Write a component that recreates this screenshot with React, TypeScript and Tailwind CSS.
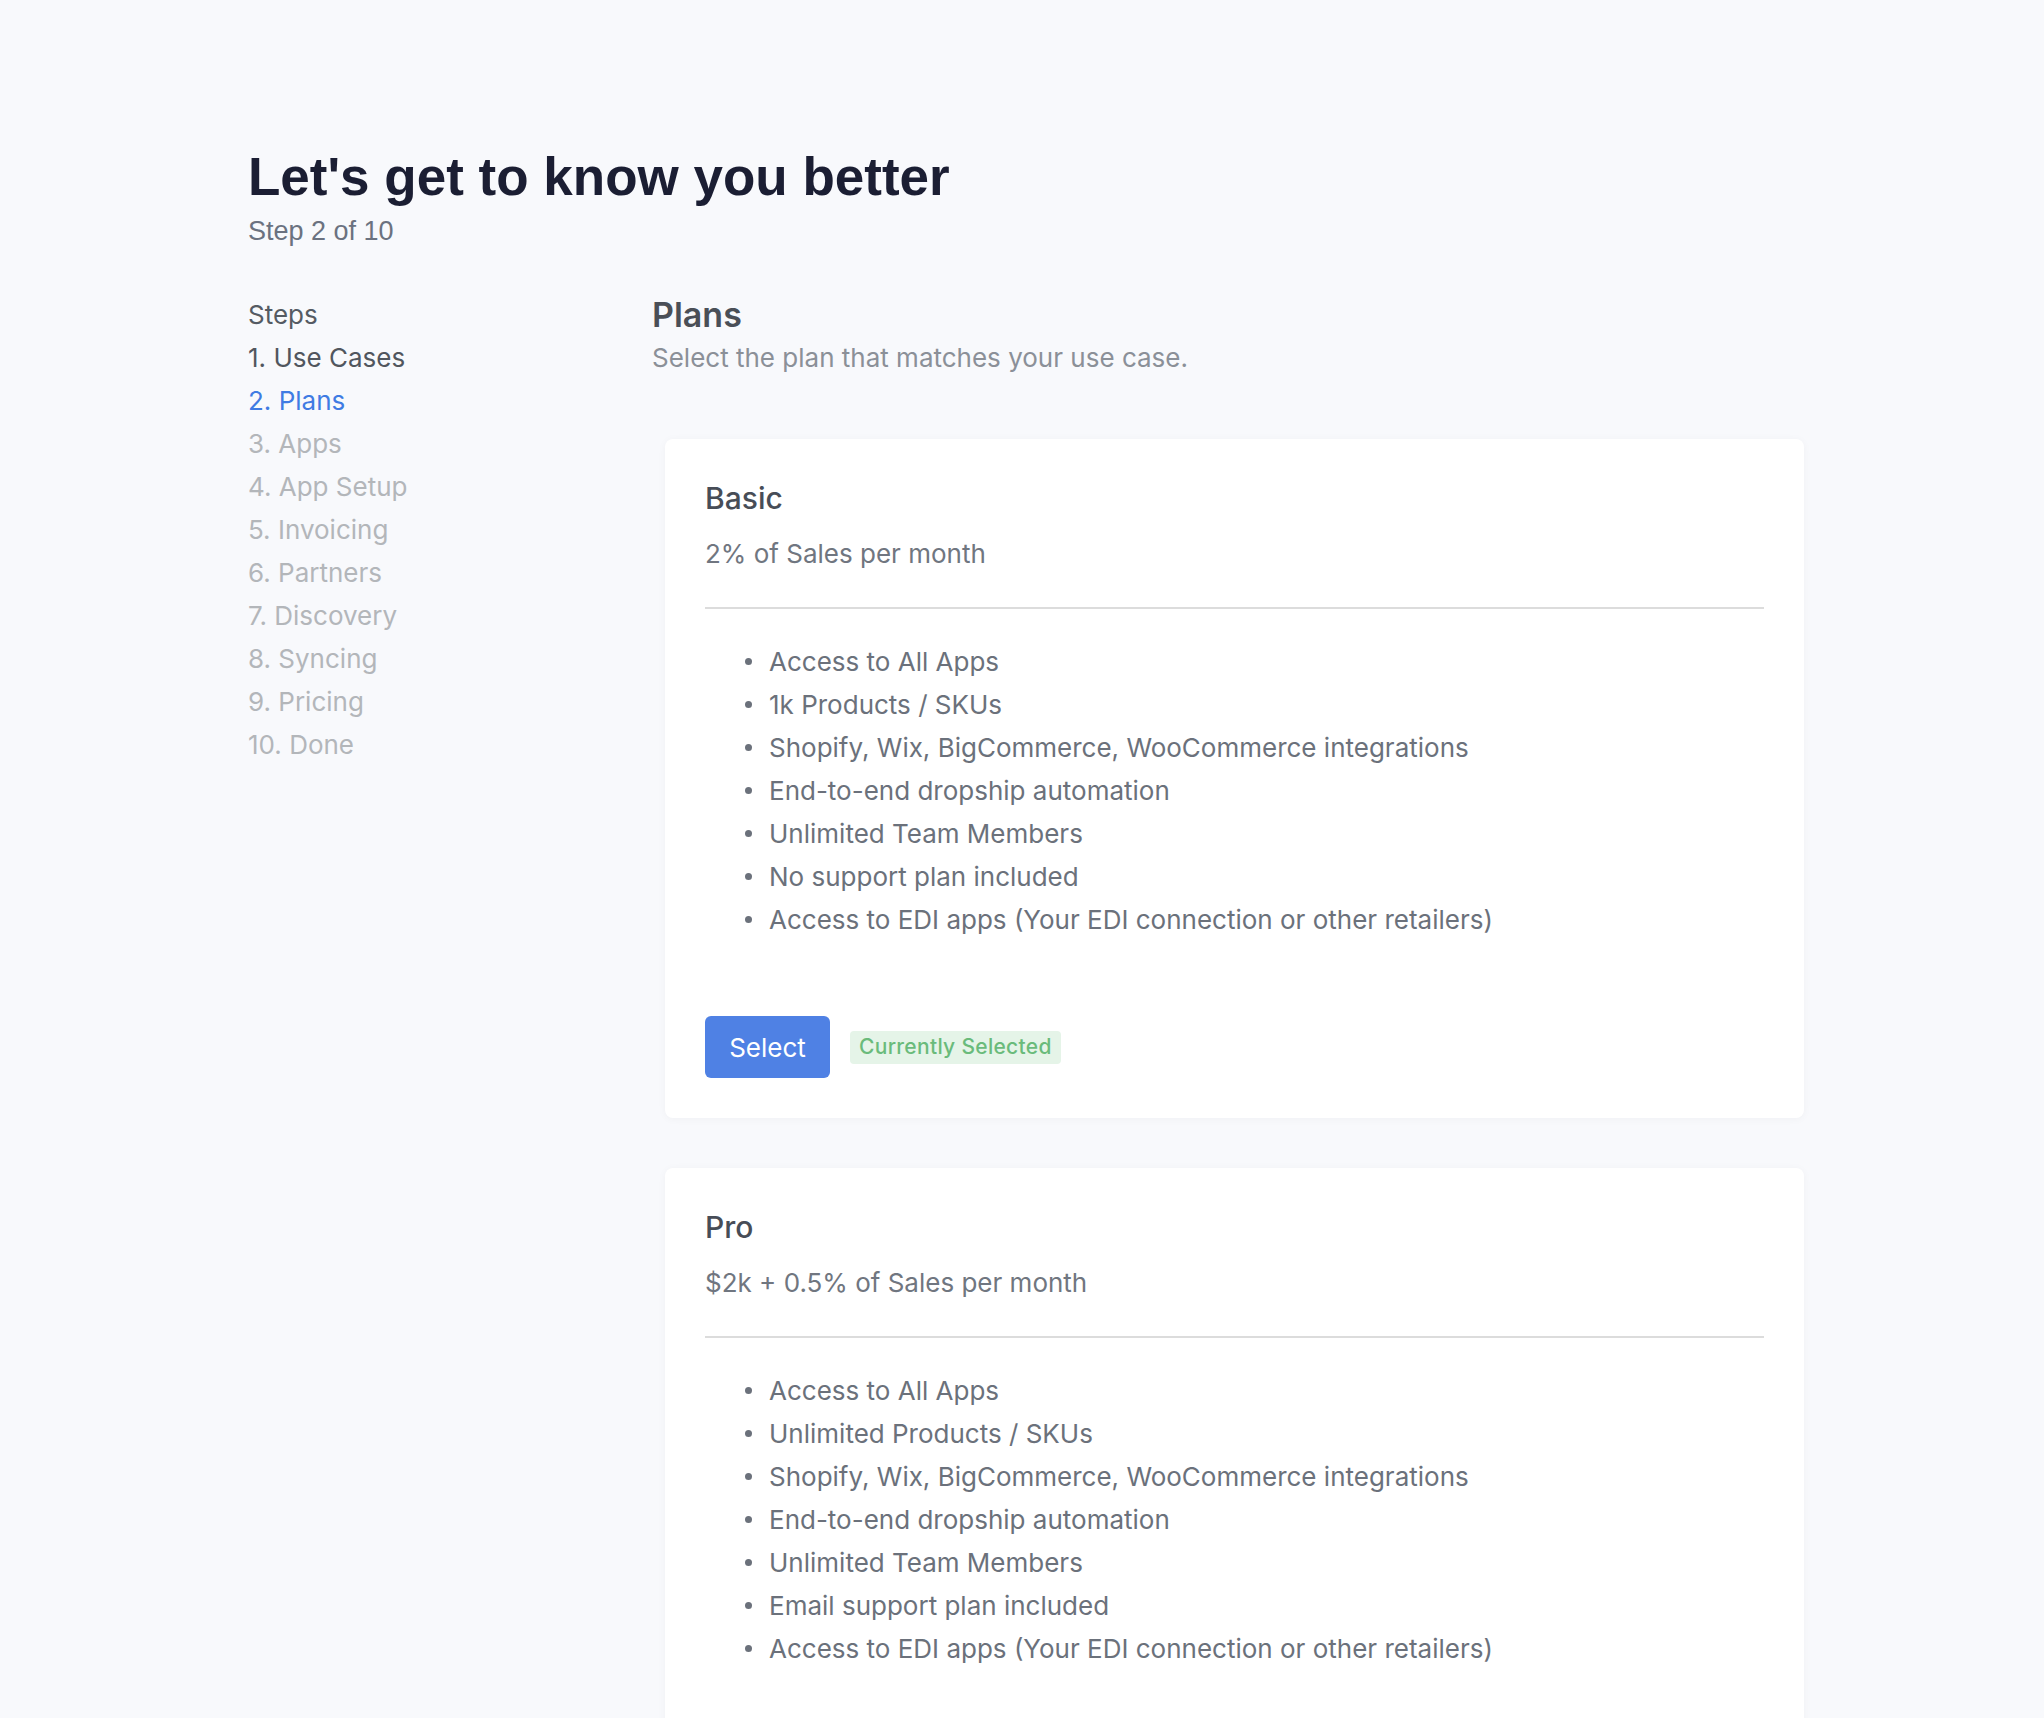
import React from 'react';

const steps = [
  'Use Cases',
  'Plans',
  'Apps',
  'App Setup',
  'Invoicing',
  'Partners',
  'Discovery',
  'Syncing',
  'Pricing',
  'Done',
];

const currentStep = 2;

interface Plan {
  name: string;
  price: string;
  features: string[];
  selected?: boolean;
}

const plans: Plan[] = [
  {
    name: 'Basic',
    price: '2% of Sales per month',
    selected: true,
    features: [
      'Access to All Apps',
      '1k Products / SKUs',
      'Shopify, Wix, BigCommerce, WooCommerce integrations',
      'End-to-end dropship automation',
      'Unlimited Team Members',
      'No support plan included',
      'Access to EDI apps (Your EDI connection or other retailers)',
    ],
  },
  {
    name: 'Pro',
    price: '$2k + 0.5% of Sales per month',
    features: [
      'Access to All Apps',
      'Unlimited Products / SKUs',
      'Shopify, Wix, BigCommerce, WooCommerce integrations',
      'End-to-end dropship automation',
      'Unlimited Team Members',
      'Email support plan included',
      'Access to EDI apps (Your EDI connection or other retailers)',
    ],
  },
];

/** 单个套餐卡片 */
function PlanCard({ plan }: { plan: Plan }) {
  return (
    <div className="ml-[13px] w-[1139px] bg-white rounded-lg shadow-[0_1px_8px_rgba(15,23,42,0.04)] px-[40px] pt-[40px] pb-[40px]">
      <div className="text-[30px] leading-[38px] font-medium text-[#474d57]">{plan.name}</div>
      <div className="mt-[18px] text-[26px] leading-[38px] text-[#707680]">{plan.price}</div>
      <div className="mt-[34px] h-[2px] bg-[#dcdcdc]" />
      <ul className="mt-[31px] pl-[40px]">
        {plan.features.map((f) => (
          <li key={f} className="flex items-center h-[43px] text-[26px] text-[#6b717b]">
            <span className="w-[7px] h-[7px] rounded-full bg-[#6b717b] mr-[17px] shrink-0" />
            {f}
          </li>
        ))}
      </ul>
      <div className="mt-[75px] flex items-center gap-[20px]">
        <button className="h-[62px] w-[125px] rounded-md bg-[#4f81e4] text-white text-[26px]">
          Select
        </button>
        {plan.selected && (
          <span className="h-[33px] px-[9px] inline-flex items-center rounded bg-[#e5f4e8] text-[#6abb7b] text-[21px] font-medium tracking-[0.3px]">
            Currently Selected
          </span>
        )}
      </div>
    </div>
  );
}

export default function App() {
  return (
    <div
      className="min-h-screen bg-[#f8f9fc] pl-[248px] pt-[145px] pb-[80px]"
      style={{ fontFamily: 'Inter, "Noto Sans", sans-serif' }}
    >
      <h1
        className="text-[53px] leading-[64px] font-bold text-[#1b1e33]"
        style={{ fontFamily: '"Liberation Sans", Arial, sans-serif' }}
      >
        Let's get to know you better
      </h1>
      <div
        className="mt-[4px] text-[27px] leading-[36px] text-[#6b7280]"
        style={{ fontFamily: '"Liberation Sans", Arial, sans-serif' }}
      >
        Step 2 of 10
      </div>

      <div className="mt-[44px] flex">
        {/* 左侧步骤列表 */}
        <div className="w-[404px] shrink-0">
          <div className="h-[43px] flex items-center text-[26px] text-[#555b63]">Steps</div>
          {steps.map((s, i) => {
            const n = i + 1;
            const color =
              n === currentStep
                ? 'text-[#3f7be3]'
                : n < currentStep
                  ? 'text-[#51565e]'
                  : 'text-[#b3b6ba]';
            return (
              <div key={s} className={`h-[43px] flex items-center text-[26px] ${color}`}>
                {n}. {s}
              </div>
            );
          })}
        </div>

        {/* 右侧套餐 */}
        <div className="flex-1">
          <div className="h-[43px] flex items-center text-[34px] font-semibold text-[#4a4f57]">Plans</div>
          <div className="h-[43px] flex items-center text-[26px] text-[#8b9098]">
            Select the plan that matches your use case.
          </div>
          <div className="mt-[60px] flex flex-col gap-[50px]">
            {plans.map((p) => (
              <PlanCard key={p.name} plan={p} />
            ))}
          </div>
        </div>
      </div>
    </div>
  );
}
